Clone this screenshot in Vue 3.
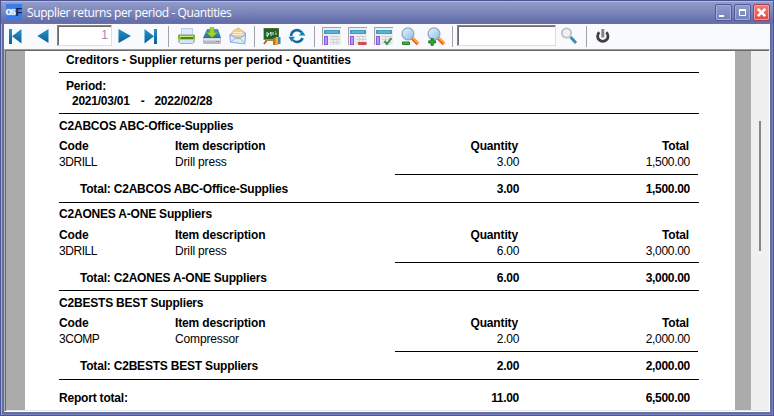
<script setup>
const groups = [
  { name: 'C2ABCOS ABC-Office-Supplies', code: '3DRILL', item: 'Drill press', qty: '3.00', total: '1,500.00', tight: false },
  { name: 'C2AONES A-ONE Suppliers', code: '3DRILL', item: 'Drill press', qty: '6.00', total: '3,000.00', tight: true },
  { name: 'C2BESTS BEST Suppliers', code: '3COMP', item: 'Compressor', qty: '2.00', total: '2,000.00', tight: false },
]
const layouts = ['plain', 'minus', 'check']
</script>

<template>
  <div class="window">
    <header class="titlebar">
      <div class="app-icon"><span class="os">os</span><span class="f">F</span></div>
      <div class="caption">Supplier returns per period - Quantities</div>
      <div class="controls">
        <button class="ctl"><svg viewBox="0 0 17 17"><path d="M4 11h5v2H4z" fill="#fff" /></svg></button>
        <button class="ctl"><svg viewBox="0 0 17 17"><path d="M5 5h6v6H5z" fill="none" stroke="#fff" stroke-width="1" transform="translate(.5 .5)" /><path d="M5 5h7v2H5z" fill="#fff" /></svg></button>
        <button class="ctl close"><svg viewBox="0 0 17 17"><path d="M4.800 4.800l7.400 7.400M12.200 4.800l-7.400 7.400" stroke="#fff" stroke-width="2.600" /></svg></button>
      </div>
    </header>

    <nav class="toolbar">
      <svg class="icon first" viewBox="1 0 24 25">
        <path d="M6 5h3v15H6zM18.500 5v14.500L9 12.300z" fill="url(#blue)" />
        <defs>
          <linearGradient id="blue" x1="0" y1="0" x2="0" y2="1"><stop offset="0" stop-color="#2793c9" /><stop offset="1" stop-color="#075f98" /></linearGradient>
          <linearGradient id="lens" x1="0" y1="0" x2="1" y2="1"><stop offset="0" stop-color="#e9f6ff" /><stop offset="1" stop-color="#84bdec" /></linearGradient>
          <linearGradient id="disk" x1="0" y1="0" x2="0" y2="1"><stop offset="0" stop-color="#3f9bc2" /><stop offset="1" stop-color="#286f9d" /></linearGradient>
        </defs>
      </svg>
      <svg class="icon prev" viewBox="0 0 26 25"><path d="M18.500 5v14L7.300 12z" fill="url(#blue)" /></svg>
      <div class="page-input">1</div>
      <svg class="icon" viewBox="0 0 26 25"><path d="M6.500 5v14L19 12z" fill="url(#blue)" /></svg>
      <svg class="icon" viewBox="0 0 26 25"><path d="M6.500 5v14.500l9.500-7.200zM16 5h3v15h-3z" fill="url(#blue)" /></svg>
      <i class="sep" />
      <svg class="icon" viewBox="0 0 26 25">
        <path d="M8 4h12v8H8z" fill="#b6d0ec" /><path d="M9 5h10v5H9z" fill="#dceafa" />
        <rect x="5" y="10" width="17" height="9" rx="1.500" fill="#b7bac0" />
        <path d="M5 11h17v4H5z" fill="#82ba24" /><path d="M7 12h13v1H7z" fill="#caed78" />
        <path d="M8 13h12v2H8z" fill="#51821b" />
        <path d="M7 16h13v4H7z" fill="#d5e5f9" /><path d="M7 19h13v1H7z" fill="#9eb5d0" />
      </svg>
      <svg class="icon" viewBox="0 0 26 25">
        <path d="M8 5h11l3 9H4z" fill="url(#disk)" />
        <rect x="4" y="14" width="18" height="6" rx="1.500" fill="#b6bbc2" /><path d="M5 14.500h16v2H5z" fill="#e4e7eb" />
        <path d="M17 17h3v1h-3z" fill="#62c43c" />
        <path d="M11 3.500h4v5h3.500L13 13.500 7.500 8.500H11z" fill="#a3d51b" stroke="#7ead14" stroke-width=".5" />
      </svg>
      <svg class="icon" viewBox="0 0 26 25">
        <path d="M5 10.500L13 4l7.500 5-.8 10.500L5.500 18z" fill="#b9c9ed" stroke="#8ba5d6" />
        <path d="M7.500 6.500Q13 2.500 18.500 7l.5 4-6 4.500-6-5z" fill="#f6cb88" />
        <path d="M8.500 8h9v1h-9zM8 10h10v1H8z" fill="#fff0cf" />
        <path d="M5 11l8 4 7.500-4-.8 9L5.500 18z" fill="#d7eefb" stroke="#8ba5d6" stroke-width=".8" />
        <path d="M5.500 18l6-4.500 3 .3 5.200 5.700" fill="none" stroke="#9bb6de" />
      </svg>
      <i class="sep near" />
      <svg class="icon" viewBox="0 0 26 25">
        <path d="M8 16l-3 4M16 16l2 4" stroke="#a66b24" stroke-width="2" />
        <path d="M4.500 4h15.500v12H4.500z" fill="#8c7440" /><path d="M5 4.500h14.500v10.500H5z" fill="#1c652b" />
        <path d="M7 9.500q2-2 2 0v2q-2 0-2-1M8 13l2-4m1 1l1-2v4m2-4v3m2-3h1m-1 2h2" stroke="#dff1db" fill="none" stroke-width="1" />
        <path d="M6 15h10v2H6z" fill="#bc823c" />
        <path d="M14 14h3v7h-3z" fill="#c87520" /><path d="M16.500 13h3v8h-3z" fill="#e6b52c" /><path d="M19 13h2.500v7H19z" fill="#4c7eaf" />
      </svg>
      <svg class="icon" viewBox="0 0 26 25">
        <path d="M6.200 12A5.800 5.800 0 0 1 16.500 8.300M17.600 14A5.800 5.800 0 0 1 7.800 16" fill="none" stroke="#126b9c" stroke-width="2.600" />
        <path d="M14 11.500h6.500L17.300 7zM3.500 12.800H10l-3.600 5z" fill="#1980b2" />
      </svg>
      <i class="sep near" />
      <svg v-for="kind in layouts" :key="kind" class="icon" viewBox="0 0 26 25">
        <path d="M3 3h19v18H3z" fill="#ededf0" /><path d="M3.500 21V3.500H22" fill="none" stroke="#a2a2a4" />
        <path d="M5 6h16v4H5z" fill="#459bc9" /><path d="M7 7.500h12v1H7z" fill="#7bc4e5" />
        <path d="M5 12h4v9H5z" fill="#8d56e6" /><path d="M6 13h2v7H6z" fill="#b694fa" />
        <path d="M11 12.500h10M11 15.500h10M11 18.500h10M14.500 12v9M18 12v9" stroke="#cbccd5" stroke-width=".8" />
        <path v-if="kind === 'minus'" d="M13 18h8.500v3H13z" fill="#d04e4e" />
        <path v-if="kind === 'check'" d="M13.500 17l2.500 3 4.500-6" fill="none" stroke="#369244" stroke-width="2" />
      </svg>
      <svg v-for="sign in ['out', 'in']" :key="sign" class="icon" viewBox="0 0 26 25">
        <path d="M15 14l6 6" stroke="#e56020" stroke-width="3.500" /><path d="M15.500 13.500l6 6" stroke="#ffb63d" stroke-width="1.500" />
        <circle cx="11" cy="9.800" r="5.900" fill="url(#lens)" stroke="#9ba9bb" stroke-width="1.400" />
        <path v-if="sign === 'out'" d="M5.500 18h7v2.500h-7z" fill="#4fb448" stroke="#23792a" />
        <path v-else d="M8 14.500h2.300v2.300h2.300v2.300h-2.300v2.300H8v-2.300H5.700v-2.300H8z" fill="#30a331" stroke="#176f25" stroke-width=".8" />
      </svg>
      <i class="sep near" />
      <div class="search-input" />
      <svg class="icon" viewBox="0 0 26 25">
        <path d="M14.500 13l5.500 6" stroke="#368fb9" stroke-width="3" />
        <circle cx="10.500" cy="9" r="4.600" fill="#f1f2f3" stroke="#bfc2c4" stroke-width="1.900" />
      </svg>
      <i class="sep" />
      <svg class="icon power" viewBox="0 0 26 25">
        <path d="M9.300 8.300a5.200 5.200 0 1 0 7 0" fill="none" stroke="#404040" stroke-width="2.800" />
        <path d="M12.800 5v8.500" stroke="#858585" stroke-width="3" />
      </svg>
    </nav>

    <main class="viewport">
      <article class="sheet">
        <h1>Creditors - Supplier returns per period - Quantities</h1>
        <section class="period">
          <div>Period:</div>
          <div class="dates"><span>2021/03/01</span><span>-</span><span>2022/02/28</span></div>
        </section>
        <section v-for="g in groups" :key="g.name" class="group" :class="{ tight: g.tight }">
          <h2>{{ g.name }}</h2>
          <div class="row head"><span>Code</span><span>Item description</span><span class="num">Quantity</span><span class="num">Total</span></div>
          <div class="row item"><span class="code">{{ g.code }}</span><span>{{ g.item }}</span><span class="num">{{ g.qty }}</span><span class="num">{{ g.total }}</span></div>
          <div class="rule" />
          <div class="row sum"><span class="label">Total: {{ g.name }}</span><span class="num">{{ g.qty }}</span><span class="num">{{ g.total }}</span></div>
        </section>
        <div class="row sum grand"><span class="label">Report total:</span><span class="num">11.00</span><span class="num">6,500.00</span></div>
      </article>
      <div class="scrollbar"><div class="thumb" /></div>
    </main>
  </div>
</template>

<style>
body { margin: 0; overflow: hidden; }
</style>

<style scoped>
* { box-sizing: border-box; }
.window { width: 774px; height: 416px; display: flex; flex-direction: column; padding: 0 3px 3px; background: #626ca8; border: 1px solid #4b5592; box-shadow: inset 1px 1px #a5aed3, inset -1px -1px #7882b9; font-family: "Liberation Sans", Arial, sans-serif; }
.titlebar { height: 23px; flex: none; display: flex; align-items: flex-start; margin: 0 -3px; padding: 3px 3px 0 5px; background: linear-gradient(#929cca, #7a84b9 50%, #626da9 90%, #6772b0); border-top: 1px solid #b4bcdd; }
.app-icon { width: 16px; height: 16px; margin-top: -1px; background: #397be8; display: flex; align-items: center; justify-content: center; line-height: 16px; font-weight: bold; }
.os { font-size: 10px; color: #e4f4ff; letter-spacing: -1.5px; text-shadow: 0 0 1px #fff; }
.f { font-size: 11px; color: #101f52; margin-left: 1px; }
.caption { flex: 1; margin-left: 5px; margin-top: -1px; height: 18px; line-height: 17px; font-family: "Open Sans", sans-serif; font-size: 12px; color: #fff; white-space: nowrap; letter-spacing: -.4px; }
.controls { display: flex; gap: 2px; margin-top: -1px; }
.ctl { width: 17px; height: 17px; padding: 0; border: 1px solid #4f5b9b; border-radius: 2px; background: linear-gradient(#929cca, #747fb9); box-shadow: inset 0 0 0 1px #a4add5; }
.ctl svg { display: block; width: 17px; height: 17px; margin: -1px; }
.close { background: linear-gradient(#f18178, #e8453d); box-shadow: inset 0 0 0 1px #f5a09b; border-color: #9c3e60; }
.toolbar { height: 25px; flex: none; display: flex; background: #f9fafd; }
.icon { width: 26px; height: 25px; flex: none; display: block; }
.first { width: 24px; }
.prev { margin-left: 2px; margin-right: 1px; }
.page-input, .search-input { height: 21px; margin-top: 1px; background: #fff; border: 1px solid; border-color: #858585 #dedede #dedede #858585; box-shadow: inset 1px 1px #6b6b6b; }
.page-input { width: 55px; font: 12px/18px "Liberation Sans", sans-serif; text-align: right; color: #9a88c2; padding-right: 3px; }
.search-input { width: 99px; }
.sep { width: 1px; height: 21px; margin: 2px 4px 0; background: #a2a2a4; flex: none; }
.sep.near { margin-left: 3px; }
.power { margin-left: -1px; }
.viewport { flex: 1; min-height: 0; display: flex; background: #ababab; border-top: 1px solid #9b9b9b; border-left: 1px solid #b4b4b4; border-bottom: 1px solid #fff; border-right: 1px solid #fff; box-shadow: inset 1px 1px #696969, inset -1px -1px #e3e3e3; padding: 1px 0 1px 20px; }
.sheet { width: 710px; height: 359px; overflow: hidden; background: #fff; color: #000; padding: 1px 36px 0 34px; font-size: 12px; line-height: 16px; font-weight: bold; white-space: nowrap; letter-spacing: -.2px; }
h1 { font-size: 12px; line-height: 16px; margin: 0; height: 21px; padding-left: 7px; border-bottom: 1px solid #000; letter-spacing: -.06px; }
.period { height: 41px; padding: 6px 0 0 7px; border-bottom: 1px solid #000; line-height: 15px; }
.dates { display: flex; gap: 11px; padding-left: 6px; letter-spacing: -.24px; }
.dates span:last-child { margin-left: -1px; }
h2 { font-size: 12px; line-height: 16px; margin: 0 0 4px; }
.group { height: 89px; padding-top: 4px; border-bottom: 1px solid #000; }
.row { display: grid; grid-template-columns: 116px 200px 144px 171px; height: 16px; }
.head { letter-spacing: -.14px; }
.item { font-weight: normal; letter-spacing: -.15px; }
.code { letter-spacing: -.45px; }
.num { text-align: right; }
.item .num, .sum .num { letter-spacing: -.3px; }
.head .num { padding-right: 1px; }
.rule { height: 1px; margin: 4px 1px 6px 336px; background: #000; }
.label { grid-column: 1 / 3; padding-left: 21px; }
.tight { height: 88px; padding-top: 3px; }
.tight h2 { margin-bottom: 5px; }
.tight .rule { margin: 3px 0 7px 336px; }
.grand { margin-top: 10px; }
.grand .label { padding-left: 0; }
.scrollbar { width: 18px; margin-left: auto; background: #f0f0f0; padding: 70px 0 0 8px; }
.thumb { width: 2px; height: 130px; background: #868686; }
</style>
